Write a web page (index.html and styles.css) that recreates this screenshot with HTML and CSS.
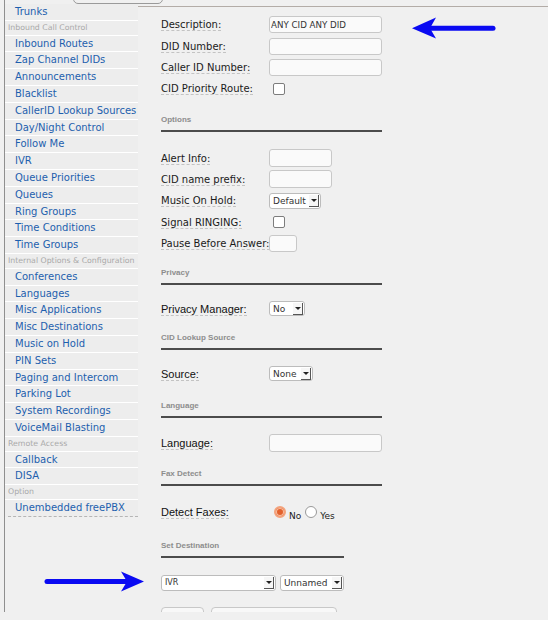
FILE: index.html
```html
<!DOCTYPE html>
<html lang="en">
<head>
    <meta charset="UTF-8">
    <meta name="viewport" content="width=device-width, initial-scale=1.0">
    <title>Inbound Routes</title>
    <link rel="stylesheet" href="styles.css">
</head>
<body>
    <div class="frame">
        <div class="topstrip"><div class="tab"></div></div>
        <div class="columns">
            <nav class="menu">
                <a href="#">Trunks</a>
                <div class="group">Inbound Call Control</div>
                <a href="#">Inbound Routes</a>
                <a href="#">Zap Channel DIDs</a>
                <a href="#">Announcements</a>
                <a href="#">Blacklist</a>
                <a href="#">CallerID Lookup Sources</a>
                <a href="#">Day/Night Control</a>
                <a href="#">Follow Me</a>
                <a href="#">IVR</a>
                <a href="#">Queue Priorities</a>
                <a href="#">Queues</a>
                <a href="#">Ring Groups</a>
                <a href="#">Time Conditions</a>
                <a href="#">Time Groups</a>
                <div class="group">Internal Options &amp; Configuration</div>
                <a href="#">Conferences</a>
                <a href="#">Languages</a>
                <a href="#">Misc Applications</a>
                <a href="#">Misc Destinations</a>
                <a href="#">Music on Hold</a>
                <a href="#">PIN Sets</a>
                <a href="#">Paging and Intercom</a>
                <a href="#">Parking Lot</a>
                <a href="#">System Recordings</a>
                <a href="#">VoiceMail Blasting</a>
                <div class="group">Remote Access</div>
                <a href="#">Callback</a>
                <a href="#">DISA</a>
                <div class="group">Option</div>
                <a href="#" class="last">Unembedded freePBX</a>
            </nav>

            <main class="content">
                <form class="route-form">
                    <div class="row">
                        <span class="label"><span class="info">Description:</span></span>
                        <input class="field" type="text" value="ANY CID ANY DID">
                    </div>
                    <div class="row">
                        <span class="label"><span class="info">DID Number:</span></span>
                        <input class="field" type="text">
                    </div>
                    <div class="row">
                        <span class="label"><span class="info">Caller ID Number:</span></span>
                        <input class="field" type="text">
                    </div>
                    <div class="row">
                        <span class="label"><span class="info">CID Priority Route:</span></span>
                        <span class="check"></span>
                    </div>

                    <div class="section-title loose">Options</div>
                    <div class="row">
                        <span class="label"><span class="info">Alert Info:</span></span>
                        <input class="field short" type="text">
                    </div>
                    <div class="row">
                        <span class="label"><span class="info">CID name prefix:</span></span>
                        <input class="field short" type="text">
                    </div>
                    <div class="row">
                        <span class="label"><span class="info">Music On Hold:</span></span>
                        <span class="select moh"><span class="value">Default</span><span class="caret"></span></span>
                    </div>
                    <div class="row">
                        <span class="label"><span class="info">Signal RINGING:</span></span>
                        <span class="check"></span>
                    </div>
                    <div class="row">
                        <span class="label"><span class="info">Pause Before Answer:</span></span>
                        <input class="field tiny" type="text">
                    </div>

                    <div class="section-title tight">Privacy</div>
                    <div class="row">
                        <span class="label big"><span class="info">Privacy Manager:</span></span>
                        <span class="select privacy"><span class="value">No</span><span class="caret"></span></span>
                    </div>

                    <div class="section-title tight">CID Lookup Source</div>
                    <div class="row">
                        <span class="label big"><span class="info">Source:</span></span>
                        <span class="select source"><span class="value">None</span><span class="caret"></span></span>
                    </div>

                    <div class="section-title loose">Language</div>
                    <div class="row">
                        <span class="label big"><span class="info">Language:</span></span>
                        <input class="field lang" type="text">
                    </div>

                    <div class="section-title">Fax Detect</div>
                    <div class="row tall">
                        <span class="label big"><span class="info">Detect Faxes:</span></span>
                        <span class="radio on"></span><span class="radio-text">No</span>
                        <span class="radio"></span><span class="radio-text">Yes</span>
                    </div>

                    <div class="section-title short">Set Destination</div>
                    <div class="row">
                        <span class="select dest"><span class="value ivr">IVR</span><span class="caret"></span></span>
                        <span class="select sub"><span class="value">Unnamed</span><span class="caret"></span></span>
                    </div>

                    <div class="actions">
                        <span class="btn small"></span>
                        <span class="btn wide"></span>
                    </div>
                </form>
            </main>
        </div>
    </div>

    <!-- pointer arrows drawn over the form -->
    <svg class="marks" width="548" height="620" viewBox="0 0 548 620">
        <line x1="428" y1="28.2" x2="493" y2="28.2" />
        <polygon points="412,28.2 436,17.5 430,28.2 436,38.5" />
        <line x1="47" y1="581.5" x2="128" y2="581.5" />
        <polygon points="144,581.5 121,571.5 127,581.5 121,591.5" />
    </svg>
</body>
</html>
```

FILE: styles.css
```css
body {
    margin: 0;
    background: #f0f0f0;
    font-family: "DejaVu Sans", Verdana, sans-serif;
    font-size: 10px;
    color: #1a1a1a;
    overflow: hidden;
    position: relative;
}
.frame {
    margin-left: 4px;
    border-left: 1px solid #8f8f8f;
    height: 612px;
}
.topstrip {
    height: 4px;
    overflow: hidden;
}
.tab {
    margin: -12px 0 0 68px;
    width: 88px;
    height: 14px;
    border: 1px solid #9a9a9a;
    border-radius: 0 0 5px 5px;
}
.columns {
    display: flex;
    align-items: flex-start;
}

/* left menu */
.menu {
    width: 133px;
    flex: none;
    background: #ededed;
}
.menu a {
    display: block;
    padding-left: 10px;
    line-height: 15.8px;
    border-bottom: 1px solid #fff;
    color: #1d5fae;
    text-decoration: none;
    white-space: nowrap;
}
.menu a.last {
    border-bottom: 1px dashed #b5b5b5;
    margin-left: 3px;
    padding-left: 7px;
}
.menu .group {
    padding-left: 3px;
    line-height: 13.8px;
    font-size: 7.8px;
    color: #a9a9a9;
    border-bottom: 1px solid #fff;
    white-space: nowrap;
}

/* form area */
.content {
    flex: 1;
    margin-top: 2px;
    border-top: 1px solid #b3aca7;
    padding: 7.3px 0 0 23px;
}
.row {
    display: flex;
    align-items: center;
    height: 21.3px;
    width: 221px;
}
.row.tall {
    height: 24px;
}
.label {
    width: 108px;
    flex: none;
    white-space: nowrap;
}
.label.big {
    font-family: "Liberation Sans", Arial, sans-serif;
    font-size: 11px;
    color: #111;
}
.info {
    border-bottom: 1px dashed #c3c3c3;
}
.section-title {
    width: 221px;
    margin: 14px 0;
    padding-bottom: 5px;
    border-bottom: 2px solid #4c4c4c;
    font: bold 8px/11px "Liberation Sans", Arial, sans-serif;
    color: #8d8d8d;
}
.section-title.loose {
    margin: 15px 0;
}
.section-title.tight {
    margin: 13px 0;
}
.section-title.short {
    width: 183px;
    margin-top: 16px;
}

.field {
    box-sizing: border-box;
    width: 113px;
    height: 17px;
    margin: 0;
    padding: 0 1px;
    border: 1px solid #c8c8c8;
    border-radius: 3px;
    background: #fafafa;
    font: 8.7px "DejaVu Sans", Verdana, sans-serif;
    color: #333;
}
.field.short {
    width: 63px;
    height: 18px;
}
.field.tiny {
    width: 28px;
}
.field.lang {
    height: 18px;
}
.check {
    box-sizing: border-box;
    width: 12px;
    height: 12px;
    margin-left: 4px;
    border: 1px solid #7d7d7d;
    border-radius: 2px;
    background: #fff;
}

.select {
    box-sizing: border-box;
    display: inline-flex;
    align-items: center;
    height: 16px;
    padding-left: 3px;
    border: 1px solid #bcbcbc;
    border-radius: 3px;
    background: #fff;
    font-size: 9px;
    color: #333;
}
.select .value {
    flex: 1;
    white-space: nowrap;
}
.select .ivr {
    font-size: 8px;
}
.caret {
    box-sizing: border-box;
    width: 10px;
    height: 12px;
    margin-right: 1px;
    border-right: 1px solid #555;
    border-bottom: 1px solid #555;
    background: #f6f6f6;
    display: flex;
    align-items: center;
    justify-content: center;
}
.caret::after {
    content: "";
    border-left: 3px solid transparent;
    border-right: 3px solid transparent;
    border-top: 3px solid #222;
}
.select.moh { width: 52px; }
.select.privacy { width: 36px; height: 15px; }
.select.source { width: 44px; height: 15px; }
.select.dest { width: 115px; }
.select.sub { width: 64px; margin-left: 4px; }

.radio {
    box-sizing: border-box;
    width: 12px;
    height: 12px;
    margin-left: 5px;
    border: 1px solid #999;
    border-radius: 50%;
    background: #fff;
}
.radio.on {
    border: 2px solid #f3a27c;
    background: #e2612d;
    box-shadow: inset 0 0 0 1px #f7c0a4;
}
.radio + .radio-text {
    margin: 8px 0 0 3px;
    font-size: 9px;
}
.radio-text + .radio {
    margin-left: 4px;
}

.actions {
    display: flex;
    gap: 7px;
    margin-top: 14px;
}
.btn {
    box-sizing: border-box;
    height: 24px;
    border: 1px solid #c8c8c8;
    border-radius: 4px;
    background: #f8f8f8;
}
.btn.small { width: 43px; }
.btn.wide { width: 126px; }

/* annotation arrows */
.marks {
    position: absolute;
    top: 0;
    left: 0;
    pointer-events: none;
}
.marks line {
    stroke: #0a0af2;
    stroke-width: 5;
    stroke-linecap: round;
}
.marks polygon {
    fill: #0a0af2;
}
```
